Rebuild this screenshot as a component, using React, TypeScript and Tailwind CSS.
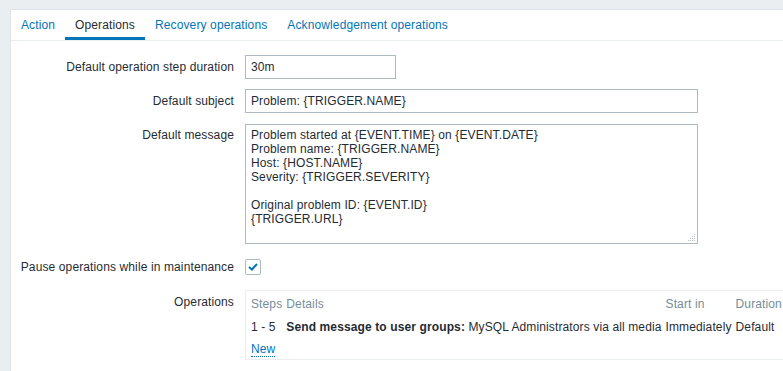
import React from "react";

const font = { fontFamily: '"Liberation Sans", Arial, sans-serif' };

function Label({ children, lh = "leading-[24px]" }: { children: React.ReactNode; lh?: string }) {
  return (
    <div className={`text-right ${lh} text-[12px] text-[#1f2c33] whitespace-nowrap`}>{children}</div>
  );
}

export default function App() {
  const message = [
    "Problem started at {EVENT.TIME} on {EVENT.DATE}",
    "Problem name: {TRIGGER.NAME}",
    "Host: {HOST.NAME}",
    "Severity: {TRIGGER.SEVERITY}",
    "",
    "Original problem ID: {EVENT.ID}",
    "{TRIGGER.URL}",
  ].join("\n");

  return (
    <div
      className="w-[783px] h-[371px] overflow-hidden bg-[#ebeef0] pl-[10px] pt-[9px] text-[12px] tracking-[0.12px] text-[#1f2c33]"
      style={font}
    >
      <div className="bg-white border-l border-t border-[#dfe4e7] h-[400px] w-[800px]">
        {/* Tabs */}
        <div className="flex h-[31px] border-b border-[#ebeef0]">
          <div className="px-[10px] h-[30px] pt-[3px] leading-[24px] text-[#0275b8]">Action</div>
          <div className="px-[10px] h-[30px] pt-[3px] leading-[24px] text-[#1f2c33] border-b-[3px] border-[#0275b8]">
            Operations
          </div>
          <div className="px-[10px] h-[30px] pt-[3px] leading-[24px] text-[#0275b8]">Recovery operations</div>
          <div className="px-[10px] h-[30px] pt-[3px] leading-[24px] text-[#0275b8]">Acknowledgement operations</div>
        </div>

        {/* Form */}
        <div className="grid grid-cols-[223px_1fr] gap-x-[11px] gap-y-[10px] pt-[14px]">
          <Label>Default operation step duration</Label>
          <div>
            <div className="w-[151px] h-[24px] border border-[#acbbc2] px-[5px] leading-[22px]">30m</div>
          </div>

          <Label>Default subject</Label>
          <div>
            <div className="w-[453px] h-[24px] border border-[#acbbc2] px-[5px] leading-[22px]">
              Problem: {"{TRIGGER.NAME}"}
            </div>
          </div>

          <div className="mt-[1px]">
            <Label lh="leading-[22px]">Default message</Label>
          </div>
          <div className="mt-[1px]">
            <div className="relative w-[453px] h-[120px] border border-[#acbbc2] px-[5px] pt-[3px] leading-[14px] whitespace-pre">
              {message}
              <svg className="absolute right-[1px] bottom-[1px]" width="8" height="8" viewBox="0 0 8 8">
                <g fill="#b8c2c7">
                  <rect x="6" y="0" width="1" height="1" />
                  <rect x="6" y="2" width="1" height="1" />
                  <rect x="4" y="2" width="1" height="1" />
                  <rect x="6" y="4" width="1" height="1" />
                  <rect x="4" y="4" width="1" height="1" />
                  <rect x="2" y="4" width="1" height="1" />
                  <rect x="6" y="6" width="1" height="1" />
                  <rect x="4" y="6" width="1" height="1" />
                  <rect x="2" y="6" width="1" height="1" />
                  <rect x="0" y="6" width="1" height="1" />
                </g>
              </svg>
            </div>
          </div>

          <div className="mt-[1px]">
            <Label>Pause operations while in maintenance</Label>
          </div>
          <div className="flex items-center h-[24px] mt-[1px]">
            <div className="w-[16px] h-[16px] border border-[#acbbc2] rounded-[2px] flex items-center justify-center">
              <svg width="10" height="8" viewBox="0 0 10 8">
                <path d="M1 4 L4 6.5 L9 1" stroke="#0275b8" strokeWidth="2" fill="none" />
              </svg>
            </div>
          </div>

          <div className="mt-[1px]">
            <Label lh="leading-[24px]">Operations</Label>
          </div>
          <div className="mt-[1px]">
            <div className="w-[560px] border border-[#ebeef0] pl-[5px] pt-[1px]">
              <table className="border-collapse">
                <tbody>
                  <tr className="h-[23px] text-[#768d99]">
                    <td className="p-0 pr-[4px] whitespace-nowrap">Steps</td>
                    <td className="p-0 pr-[4px] whitespace-nowrap">Details</td>
                    <td className="p-0 pr-[4px] whitespace-nowrap">Start in</td>
                    <td className="p-0 pr-[4px] whitespace-nowrap">Duration</td>
                  </tr>
                  <tr className="h-[23px]">
                    <td className="p-0 pr-[4px] whitespace-nowrap">1 - 5</td>
                    <td className="p-0 pr-[4px] whitespace-nowrap">
                      <b>Send message to user groups:</b> MySQL Administrators via all media
                    </td>
                    <td className="p-0 pr-[4px] whitespace-nowrap">Immediately</td>
                    <td className="p-0 pr-[4px] whitespace-nowrap">Default</td>
                  </tr>
                  <tr className="h-[21px]">
                    <td className="p-0 pr-[4px]" colSpan={4}>
                      <span className="text-[#0275b8] border-b border-dotted border-[#0275b8]">New</span>
                    </td>
                  </tr>
                </tbody>
              </table>
            </div>
          </div>
        </div>
      </div>
    </div>
  );
}
